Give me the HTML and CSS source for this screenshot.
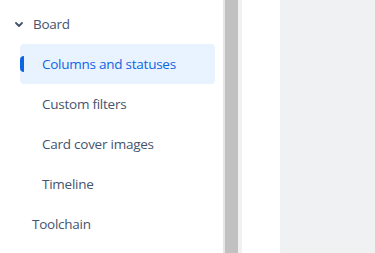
FILE: index.html
```html
<!DOCTYPE html>
<html>
<head>
    <title>Settings</title>
    <link rel="stylesheet" href="styles.css">
</head>
<body>
    <div class="page">
        <nav class="sidebar">
            <div class="group">
                <svg class="chevron" width="8" height="5" viewBox="0 0 8 5">
                    <path d="M1 1 L4 4 L7 1" fill="none" stroke="#44546f" stroke-width="1.8" stroke-linecap="round" stroke-linejoin="round"/>
                </svg>
                <span>Board</span>
            </div>
            <a class="item active" href="#">Columns and statuses</a>
            <a class="item" href="#">Custom filters</a>
            <a class="item" href="#">Card cover images</a>
            <a class="item" href="#">Timeline</a>
            <div class="group top">Toolchain</div>
        </nav>
        <div class="scrollbar"><div class="thumb"></div></div>
        <div class="gutter"></div>
        <div class="content"></div>
    </div>
</body>
</html>
```
FILE: styles.css
```css
body {
    margin: 0;
    font-family: "Open Sans", "Noto Sans", sans-serif;
    font-size: 13.5px;
    letter-spacing: -0.25px;
    color: #44546f;
}
.page {
    display: flex;
    height: 253px;
    overflow: hidden;
}
.sidebar {
    width: 223px;
    padding-top: 4px;
    box-sizing: border-box;
    background: #fff;
}
.group {
    display: flex;
    align-items: center;
    height: 40px;
    padding-left: 15px;
}
.group.top {
    padding-left: 32px;
}
.chevron {
    margin-right: 10px;
}
.item {
    position: relative;
    display: flex;
    align-items: center;
    height: 40px;
    margin: 0 8px 0 20px;
    padding-left: 22px;
    border-radius: 4px;
    color: #44546f;
    text-decoration: none;
}
.item.active {
    background: #e9f2ff;
    color: #0c66e4;
}
.item.active::before {
    content: "";
    position: absolute;
    left: 0;
    top: 12px;
    width: 4px;
    height: 16px;
    background: #0c66e4;
    border-radius: 4px 0 0 4px;
}
.scrollbar {
    width: 19px;
    background: #f1f1f1;
    border-left: 2px solid #e6e6e6;
    box-sizing: border-box;
    padding-right: 4px;
}
.thumb {
    width: 13px;
    height: 100%;
    background: #c1c1c1;
}
.gutter {
    width: 38px;
    background: #fff;
}
.content {
    flex: 1;
    background: #f0f1f3;
}
```
